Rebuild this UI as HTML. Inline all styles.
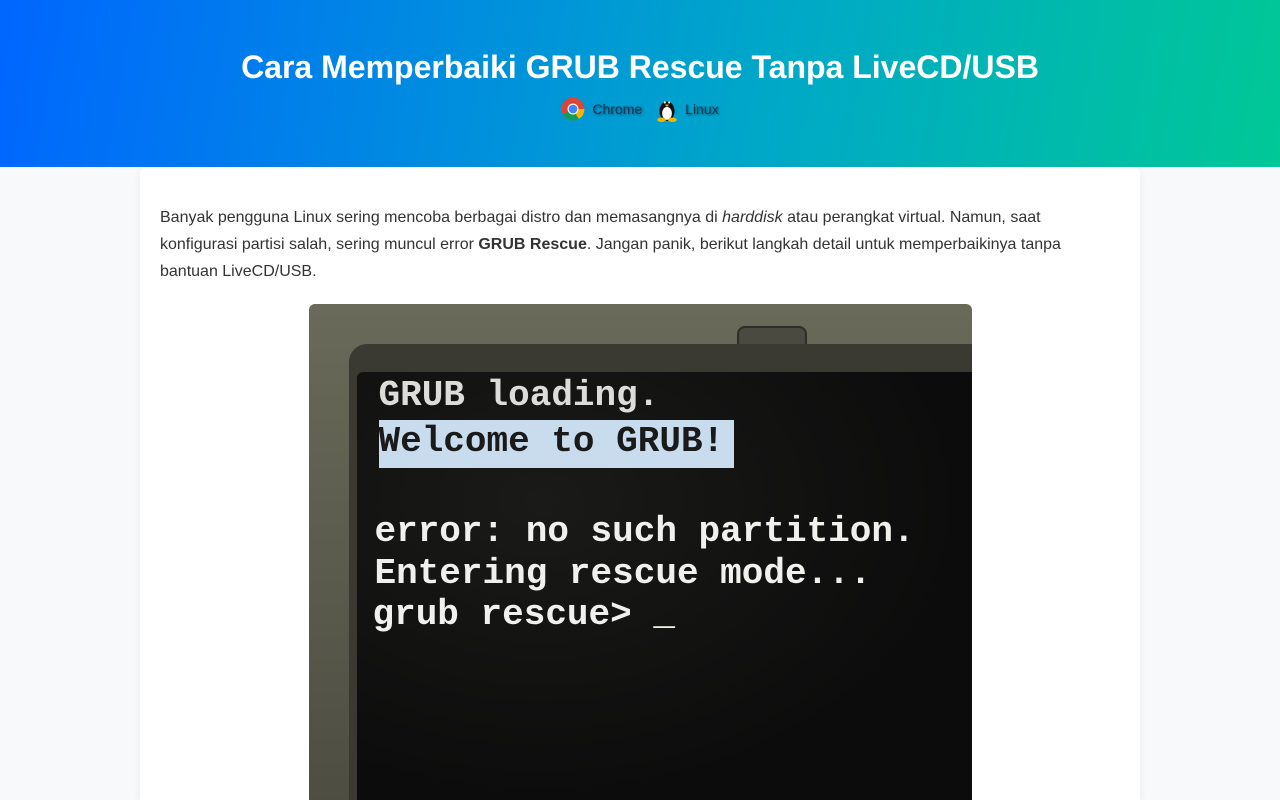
<!DOCTYPE html>
<html><head><meta charset="utf-8"><style>
html,body{overflow:hidden}
body{margin:0;background:#f7f9fb;font-family:"Liberation Sans",sans-serif;height:800px}
header{height:167px;background:linear-gradient(100deg,#0066ff 0%,#00a8c8 60%,#00c896 100%);text-align:center;color:#fff}
h1{margin:0;padding-top:47px;font-size:32px;font-weight:bold;line-height:40px}
.tags{margin-top:9px;font-size:14px;color:#1a3550;text-shadow:1px 1px 2px rgba(0,0,0,.5);display:flex;justify-content:center;align-items:center;gap:14px}
.tags span{display:flex;align-items:center;gap:7px}
main{width:1000px;margin:0 auto;background:#fff;border-radius:8px 8px 0 0;box-shadow:0 2px 10px rgba(0,0,0,.06);padding:37px 20px 0;height:633px;box-sizing:border-box;overflow:hidden}
p{margin:0;font-size:16px;line-height:27px;color:#333}
.img{position:relative;width:663px;height:500px;margin:19px auto 0;border-radius:6px 6px 0 0;overflow:hidden;background:linear-gradient(180deg,#6a6a5a,#4d4d42)}
.bez{position:absolute;left:40px;top:40px;right:-20px;bottom:-20px;background:#3a3a32;border-radius:18px 0 0 0}
.scr{position:absolute;left:48px;top:68px;right:0;bottom:0;background:radial-gradient(ellipse at 30% 30%,#1a1a18,#0c0c0c 70%);border-radius:6px 0 0 0}
.bump{position:absolute;left:428px;top:22px;width:66px;height:32px;background:#4a4a40;border-radius:8px 8px 0 0;border:2px solid #2e2e28}
.t{position:absolute;font-family:"Liberation Mono",monospace;color:#f0f0ec;font-size:36px;white-space:pre;line-height:40px;font-weight:bold}
</style></head><body>
<header><h1>Cara Memperbaiki GRUB Rescue Tanpa LiveCD/USB</h1>
<div class="tags"><span><svg width="24" height="24" viewBox="0 0 22 22"><circle cx="11" cy="11" r="10.5" fill="#db4437"/><path d="M11 11 L1.9 16.2 A10.5 10.5 0 0 0 16.3 20.1Z" fill="#0f9d58"/><path d="M11 11 L16.3 20.1 A10.5 10.5 0 0 0 21.5 11 L11 0.5 Z" fill="#f4b400"/><path d="M11 11 L11 .5 L21.5 11Z" fill="#db4437"/><circle cx="11" cy="11" r="5" fill="#fff"/><circle cx="11" cy="11" r="4" fill="#4285f4"/></svg>Chrome</span>
<span><svg width="22" height="26" viewBox="0 0 20 24"><ellipse cx="10" cy="14" rx="7" ry="9" fill="#111"/><ellipse cx="10" cy="16" rx="4.5" ry="6" fill="#fff"/><circle cx="8" cy="6" r="1" fill="#fff"/><circle cx="12" cy="6" r="1" fill="#fff"/><path d="M8 8h4l-2 2z" fill="#f4b400"/><ellipse cx="5" cy="22" rx="4" ry="2" fill="#f4b400"/><ellipse cx="15" cy="22" rx="4" ry="2" fill="#f4b400"/></svg>Linux</span></div></header>
<main>
<p>Banyak pengguna Linux sering mencoba berbagai distro dan memasangnya di <i>harddisk</i> atau perangkat virtual. Namun, saat konfigurasi partisi salah, sering muncul error <b>GRUB Rescue</b>. Jangan panik, berikut langkah detail untuk memperbaikinya tanpa bantuan LiveCD/USB.</p>
<div class="img"><div class="bump"></div><div class="bez"></div><div class="scr"></div>
<div style="position:absolute;left:70px;top:116px;width:355px;height:48px;background:#c8dced"></div>
<div class="t" style="left:70px;top:72px;color:#dcdcd8">GRUB loading.</div>
<div class="t" style="left:70px;top:118px;color:#1a1a1a">Welcome to GRUB!</div>
<div class="t" style="left:66px;top:208px">error: no such partition.</div>
<div class="t" style="left:66px;top:250px">Entering rescue mode...</div>
<div class="t" style="left:64px;top:291px">grub rescue&gt; _</div>
</div>
</main>
</body></html>
